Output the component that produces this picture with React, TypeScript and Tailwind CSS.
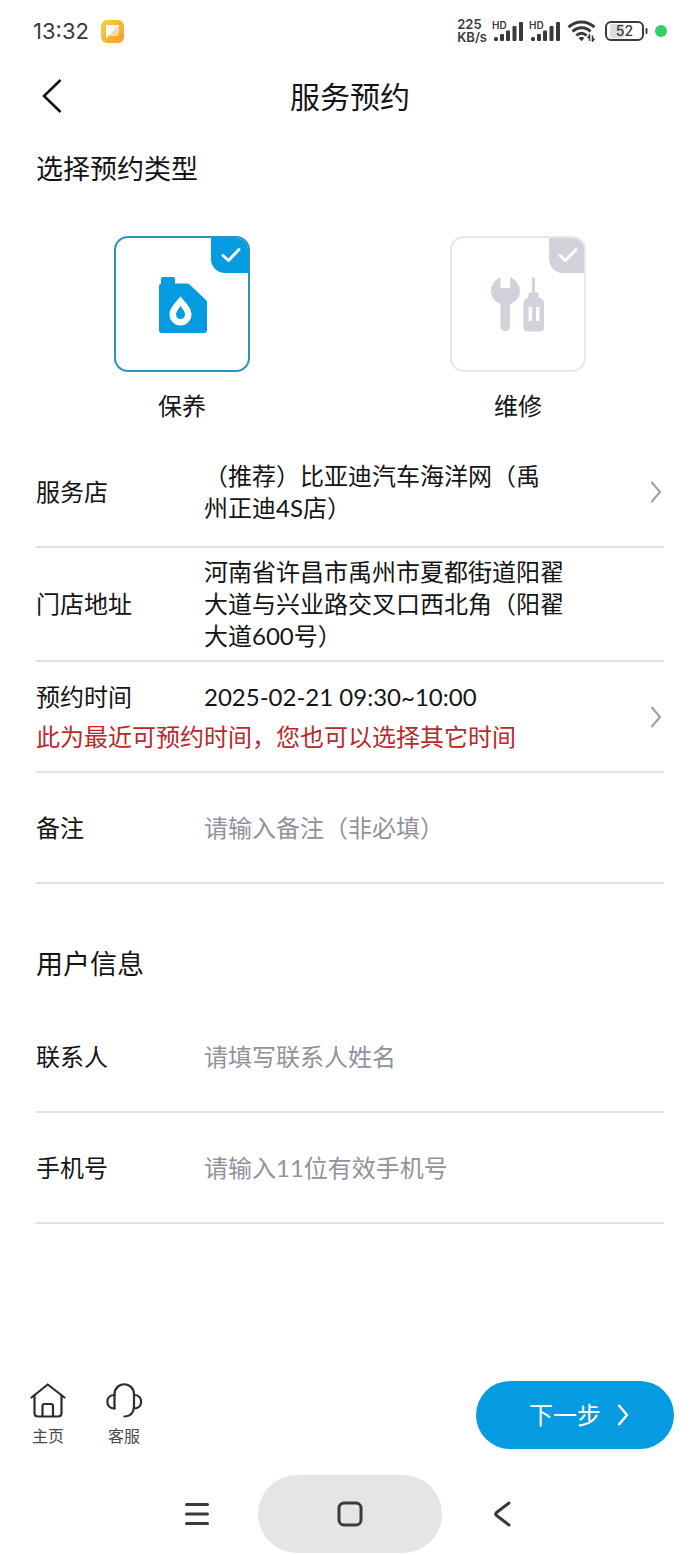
import { useState } from "react";
import type { ReactNode } from "react";

const SERVICE_TYPES = [
  { key: "maintain", label: "保养" },
  { key: "repair", label: "维修" },
];

function SignalIcon() {
  return (
    <svg width="32" height="26" viewBox="0 0 32 26" fill="#3a3a3a">
      <text x="0" y="11" fontSize="10" fontWeight="600" fontFamily="Inter, sans-serif">HD</text>
      <rect x="2" y="19" width="4" height="4" rx="1.5" />
      <rect x="8" y="16" width="4" height="7" rx="1" />
      <rect x="14" y="12.5" width="4" height="10.5" rx="1" />
      <rect x="20.5" y="8" width="4" height="15" rx="1" />
      <rect x="27" y="4" width="4" height="19" rx="1" />
    </svg>
  );
}

function WifiIcon() {
  return (
    <svg width="30" height="22" viewBox="0 0 30 22" fill="none" stroke="#3a3a3a">
      <path d="M1.500 7.200C9 .3 20 .3 27.500 7.200" strokeWidth="3" />
      <path d="M5.500 11.500C11 6.500 18.500 6.500 23.500 11.500" strokeWidth="3" />
      <path d="M9.300 15.500C12.500 12.700 16.500 12.700 19.700 15.500" strokeWidth="2.800" />
      <path d="M11.500 18Q14.500 15.600 17.500 18L14.500 21.300Z" fill="#3a3a3a" stroke="none" />
      <path d="M22.500 21v-5.500l-2 2.500M25.500 15.500V21l2-2.500" strokeWidth="1.500" />
    </svg>
  );
}

function BatteryIcon() {
  return (
    <svg width="44" height="20" viewBox="0 0 44 20" fill="none">
      <rect x="5" y="3" width="14" height="14" rx="2" fill="#dcdcdc" />
      <rect x="1" y="1" width="37" height="18" rx="5" stroke="#3a3a3a" strokeWidth="2" />
      <rect x="40.500" y="7" width="2" height="6" rx="1" fill="#3a3a3a" />
      <text x="19.500" y="15" textAnchor="middle" fontSize="14" fontWeight="500" fontFamily="Inter, sans-serif" fill="#3a3a3a">52</text>
    </svg>
  );
}

function NoteAppIcon() {
  return (
    <svg width="23" height="23" viewBox="0 0 23 23">
      <defs>
        <linearGradient id="note" x1="0" y1="0" x2="1" y2="1">
          <stop offset="0" stopColor="#f8d04a" />
          <stop offset="1" stopColor="#f59b2c" />
        </linearGradient>
      </defs>
      <rect width="23" height="23" rx="6" fill="url(#note)" />
      <path d="M5 5h13v7.500Q18 16 14.500 16H7.500L5 18.500z" fill="#fbdc9c" />
      <path d="M5 5h13L5 18.500z" fill="#fff" />
    </svg>
  );
}

function StatusBar() {
  return (
    <div className="flex h-[62px] items-center justify-between pr-[33px] pl-[33px] font-['Inter',sans-serif] text-[#3a3a3a]">
      <div className="flex items-center gap-3">
        <span className="text-[22px]">13:32</span>
        <NoteAppIcon />
      </div>
      <div className="flex items-center gap-1.5">
        <div className="flex items-center gap-[5px]">
          <div className="text-[13px] leading-[13px] font-semibold">
            <div>225</div>
            <div>KB/s</div>
          </div>
          <SignalIcon />
          <SignalIcon />
        </div>
        <WifiIcon />
        <div className="flex items-center gap-1.5 pl-0.5">
          <BatteryIcon />
          <span className="size-3 rounded-full bg-[#34cf67]" />
        </div>
      </div>
    </div>
  );
}

function OilIcon() {
  return (
    <svg width="50" height="58" viewBox="-2 -2 50 58">
      <path
        d="M2 2Q2 0 4 0H14Q16 0 16 2V6.500H28Q29.500 6.500 30.500 7.500L47 23Q48 24 48 25.500V53Q48 56 45 56H3Q0 56 0 53V9Q0 7 2 6.500Z"
        fill="#049be0"
      />
      <path d="M21.500 19.500C26 25 32.500 30.500 32.500 37.500A11 11 0 0 1 10.500 37.500C10.500 30.500 17 25 21.500 19.500Z" fill="#fff" />
      <path d="M21.500 29C24 32.500 26 34.500 26 37.500A4.500 4.500 0 0 1 17 37.500C17 34.500 19 32.500 21.500 29Z" fill="#049be0" />
    </svg>
  );
}

function ToolsIcon() {
  return (
    <svg width="54" height="55" viewBox="0 0 54 55" fill="#d2d2da">
      <path d="M9.500 0.500V11H19V0.500C25 2.500 29 8 29 14C29 20 25 25 19 27V49.500A4.700 4.700 0 0 1 9.500 49.500V27C4 25 0 20 0 14C0 8 4 2.500 9.500 0.500Z" />
      <path d="M41 1.500A1.500 1.500 0 0 1 44 1.500V15.500H46.500Q47.500 15.500 47.500 16.500V20.500Q53 21.500 53 26V50Q53 54.500 48.500 54.500H37Q32.500 54.500 32.500 50V26Q32.500 21.500 37.500 20.500V16.500Q37.500 15.500 38.500 15.500H41Z" />
      <path d="M37.500 30H41V44H37.500zM45 30H48.500V44H45z" fill="#fff" />
    </svg>
  );
}

function TypeCard({ label, checked, onSelect, children }: {
  label: string;
  checked: boolean;
  onSelect: () => void;
  children: ReactNode;
}) {
  return (
    <label className="flex cursor-pointer flex-col items-center">
      <input type="radio" name="type" className="sr-only" checked={checked} onChange={onSelect} />
      <span
        className={`relative flex size-[136px] items-center justify-center overflow-hidden rounded-[14px] border-2 ${
          checked ? "border-[#2b93bd]" : "border-[#e8e8eb]"
        }`}
      >
        {children}
        <span
          className={`absolute -top-0.5 -right-0.5 flex h-[37px] items-center justify-center rounded-bl-[14px] ${
            checked ? "w-[39px] bg-[#049be0]" : "w-[37px] bg-[#d2d2da]"
          }`}
        >
          <svg width="20" height="16" viewBox="0 0 20 16" fill="none" stroke="#fff" strokeWidth="3" strokeLinecap="round" strokeLinejoin="round">
            <path d="M2 8.500L7.500 13.500L18 2.500" />
          </svg>
        </span>
      </span>
      <span className="pt-4 text-2xl leading-9">{label}</span>
    </label>
  );
}

function Chevron({ className }: { className: string }) {
  return (
    <svg className={className} width="12" height="22" viewBox="0 0 12 22" fill="none" stroke="currentColor" strokeLinejoin="round">
      <path d="M1.500 1L10 11L1.500 21" />
    </svg>
  );
}

const rowClass = "flex min-h-[111px] w-full items-center border-b-2 border-[#e2e2e4] text-left";

function InputRow({ id, label, placeholder, type = "text" }: {
  id: string;
  label: string;
  placeholder: string;
  type?: string;
}) {
  return (
    <div className={rowClass}>
      <label htmlFor={id} className="w-[168px] shrink-0">{label}</label>
      <input id={id} type={type} placeholder={placeholder} className="min-w-0 flex-1 outline-none placeholder:text-[#92929c]" />
    </div>
  );
}

export default function App() {
  const [serviceType, setServiceType] = useState("maintain");

  return (
    <div className="flex min-h-screen flex-col bg-white font-['Lato','Noto_Sans_CJK_SC',sans-serif] text-[#141414]">
      <StatusBar />

      <header className="grid h-[68px] grid-cols-[1fr_auto_1fr] items-center px-10">
        <button type="button" aria-label="返回" className="w-fit">
          <svg width="24" height="34" viewBox="0 0 24 34" fill="none" stroke="#111" strokeWidth="2.500">
            <path d="M20.500 1L4 17L20.500 33" />
          </svg>
        </button>
        <h1 className="text-[30px] leading-10">服务预约</h1>
      </header>

      <main className="flex-1 text-2xl leading-8">
        <h2 className="px-9 pt-[19px] text-[27px] leading-10">选择预约类型</h2>

        <div className="grid grid-cols-2 px-3.5 pt-[47px]">
          {SERVICE_TYPES.map((t) => (
            <TypeCard key={t.key} label={t.label} checked={serviceType === t.key} onSelect={() => setServiceType(t.key)}>
              {t.key === "maintain" ? <OilIcon /> : <ToolsIcon />}
            </TypeCard>
          ))}
        </div>

        <section className="px-9 pt-[13px]">
          <button type="button" className={rowClass}>
            <span className="w-[168px] shrink-0">服务店</span>
            <span className="max-w-[350px]">（推荐）比亚迪汽车海洋网（禹州正迪4S店）</span>
            <Chevron className="mr-0.5 ml-auto shrink-0 stroke-2 text-[#a0a0a0]" />
          </button>

          <div className={`${rowClass} py-2`}>
            <span className="w-[168px] shrink-0">门店地址</span>
            <span className="max-w-[370px]">河南省许昌市禹州市夏都街道阳翟大道与兴业路交叉口西北角（阳翟大道600号）</span>
          </div>

          <button type="button" className={rowClass}>
            <span className="flex flex-col gap-2">
              <span className="flex">
                <span className="w-[168px] shrink-0">预约时间</span>
                <span>2025-02-21 09:30~10:00</span>
              </span>
              <span className="text-[#b8292b]">此为最近可预约时间，您也可以选择其它时间</span>
            </span>
            <Chevron className="mr-0.5 ml-auto shrink-0 stroke-2 text-[#a0a0a0]" />
          </button>

          <InputRow id="remark" label="备注" placeholder="请输入备注（非必填）" />
        </section>

        <section className="px-9 pt-[60px]">
          <h2 className="pb-[18px] text-[27px] leading-10">用户信息</h2>
          <InputRow id="contact" label="联系人" placeholder="请填写联系人姓名" />
          <InputRow id="phone" label="手机号" placeholder="请输入11位有效手机号" type="tel" />
        </section>
      </main>

      <footer className="flex items-center justify-between pt-10 pr-[26px] pb-[26px] pl-[30px]">
        <div className="flex gap-10 text-base leading-6 text-[#4a4a4a]">
          <a href="#home" className="flex w-9 flex-col items-center gap-1.5">
            <svg width="36" height="35" viewBox="0 0 36 35" fill="none" stroke="#2d2d30" strokeWidth="2.200" strokeLinecap="round" strokeLinejoin="round">
              <path d="M1.500 14.500L17.700 1.500L34.500 14.500" />
              <path d="M4.500 12.500V30Q4.500 33.500 8 33.500H28Q31.500 33.500 31.500 30V12.500" />
              <path d="M12.500 33V23Q12.500 21 14.500 21H21Q23 21 23 23V33" />
            </svg>
            主页
          </a>
          <a href="#service" className="flex w-9 flex-col items-center gap-1.5">
            <svg width="36" height="35" viewBox="0 0 36 35" fill="none" stroke="#2d2d30" strokeWidth="2.200" strokeLinecap="round" strokeLinejoin="round">
              <path d="M8.500 25.500V11A9.700 9.700 0 0 1 28 11V24Q27 33.500 18.500 33.500" />
              <path d="M8.500 12C-1 12 -1 25.500 8.500 25.500" />
              <path d="M28 12C37.500 12 37.500 25.500 28 25.500" />
            </svg>
            客服
          </a>
        </div>
        <button type="button" className="flex h-[68px] w-[198px] items-center justify-center gap-4 rounded-full bg-[#049be0] pl-2 text-2xl text-white">
          下一步
          <Chevron className="stroke-[2.5]" />
        </button>
      </footer>

      <nav className="flex items-center justify-center gap-12 pb-0.5 text-[#3a3a3a]">
        <button type="button" aria-label="最近任务">
          <svg width="26" height="26" viewBox="0 0 26 26" fill="none" stroke="currentColor" strokeWidth="3" strokeLinecap="round">
            <path d="M2.500 3.500H23.500M2.500 13H23.500M2.500 22.500H23.500" />
          </svg>
        </button>
        <button type="button" aria-label="主屏幕" className="flex h-[78px] w-[184px] items-center justify-center rounded-full bg-[#e5e5e5]">
          <svg width="26" height="26" viewBox="0 0 26 26" fill="none" stroke="currentColor" strokeWidth="3">
            <rect x="2" y="2" width="22" height="22" rx="5" />
          </svg>
        </button>
        <button type="button" aria-label="返回上一级">
          <svg width="26" height="26" viewBox="0 0 26 26" fill="none" stroke="currentColor" strokeWidth="3" strokeLinecap="round" strokeLinejoin="round">
            <path d="M19 2L6.500 11.500Q5 13 6.500 14.500L19 24" />
          </svg>
        </button>
      </nav>
    </div>
  );
}
